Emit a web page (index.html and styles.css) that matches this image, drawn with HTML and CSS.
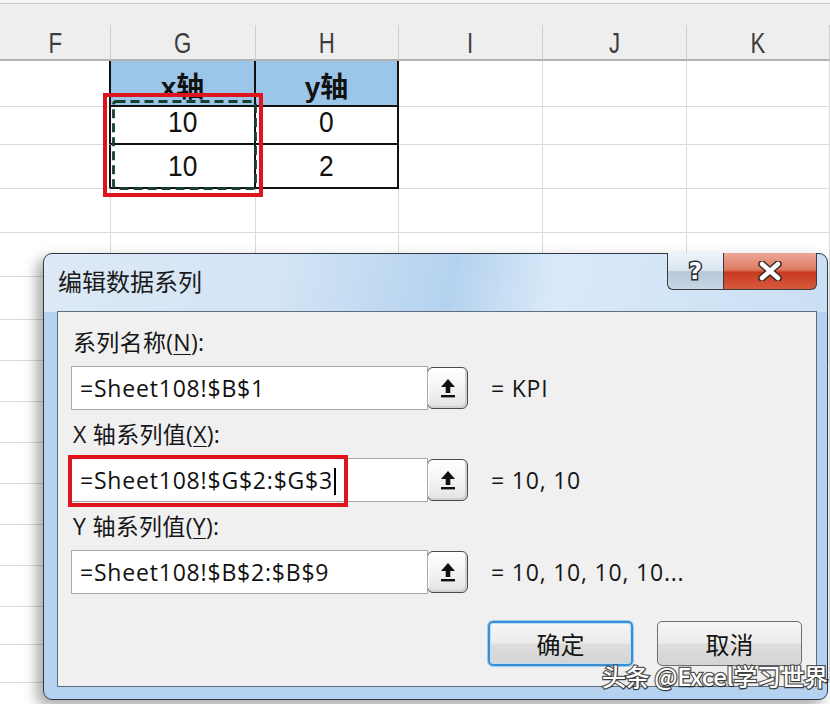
FILE: index.html
```html
<!DOCTYPE html>
<html lang="zh-CN">
<head>
<meta charset="utf-8">
<title>编辑数据系列</title>
<link rel="stylesheet" href="styles.css">
</head>
<body>
<div class="app">
  <div class="sheet">
    <div class="topstrip"></div>
    <div class="colhead">
      <div class="ch"><span>F</span></div><div class="ch"><span>G</span></div><div class="ch"><span>H</span></div><div class="ch"><span>I</span></div><div class="ch"><span>J</span></div><div class="ch"><span>K</span></div>
    </div>
    <div class="grid">
      <div class="row r40"><div class="c bk"></div><div class="c head bk bb">x轴</div><div class="c head bk bb">y轴</div><div class="c"></div><div class="c"></div><div class="c"></div></div>
      <div class="row r44"><div class="c bk"></div><div class="c num bk bb"><span>10</span></div><div class="c num bk bb"><span>0</span></div><div class="c"></div><div class="c"></div><div class="c"></div></div>
      <div class="row r44"><div class="c bk"></div><div class="c num bk bb"><span>10</span></div><div class="c num bk bb"><span>2</span></div><div class="c"></div><div class="c"></div><div class="c"></div></div>
      <div class="row r44"><div class="c"></div><div class="c"></div><div class="c"></div><div class="c"></div><div class="c"></div><div class="c"></div></div>
      <div class="row r44"><div class="c"></div><div class="c"></div><div class="c"></div><div class="c"></div><div class="c"></div><div class="c"></div></div>
      <div class="row r43"><div class="c"></div><div class="c"></div><div class="c"></div><div class="c"></div><div class="c"></div><div class="c"></div></div>
      <div class="row r41"><div class="c"></div><div class="c"></div><div class="c"></div><div class="c"></div><div class="c"></div><div class="c"></div></div>
      <div class="row r41"><div class="c"></div><div class="c"></div><div class="c"></div><div class="c"></div><div class="c"></div><div class="c"></div></div>
      <div class="row r41"><div class="c"></div><div class="c"></div><div class="c"></div><div class="c"></div><div class="c"></div><div class="c"></div></div>
      <div class="row r41"><div class="c"></div><div class="c"></div><div class="c"></div><div class="c"></div><div class="c"></div><div class="c"></div></div>
      <div class="row r41"><div class="c"></div><div class="c"></div><div class="c"></div><div class="c"></div><div class="c"></div><div class="c"></div></div>
      <div class="row r41"><div class="c"></div><div class="c"></div><div class="c"></div><div class="c"></div><div class="c"></div><div class="c"></div></div>
      <div class="row r41"><div class="c"></div><div class="c"></div><div class="c"></div><div class="c"></div><div class="c"></div><div class="c"></div></div>
      <div class="row r38"><div class="c"></div><div class="c"></div><div class="c"></div><div class="c"></div><div class="c"></div><div class="c"></div></div>
      <div class="row r38"><div class="c"></div><div class="c"></div><div class="c"></div><div class="c"></div><div class="c"></div><div class="c"></div></div>
    </div>
    <svg class="ants" width="146" height="92" viewBox="0 0 146 92">
      <rect x="1.5" y="1.5" width="142" height="87" rx="3" fill="none" stroke="#173f30" stroke-width="2.8" stroke-dasharray="9 5"/>
    </svg>
    <div class="redsel"></div>
  </div>

  <div class="dialog">
    <div class="titlebar">
      <div class="title">编辑数据系列</div>
      <div class="capbtns">
        <div class="help"><span class="qmark">?</span></div>
        <div class="close">
          <svg width="24" height="20" viewBox="0 0 24 20">
            <path d="M4 3 L20 17 M20 3 L4 17" stroke="#3a2a26" stroke-width="7.5" stroke-linecap="round" fill="none"/>
            <path d="M4 3 L20 17 M20 3 L4 17" stroke="#ffffff" stroke-width="4.5" stroke-linecap="round" fill="none"/>
          </svg>
        </div>
      </div>
    </div>
    <div class="panel">
      <div class="group">
        <div class="label">系列名称(<u>N</u>):</div>
        <div class="fieldrow">
          <div class="field">=Sheet108!$B$1</div>
          <div class="collapse"><svg width="18" height="22" viewBox="0 0 18 22"><path d="M9 2 L16 10 H11.3 V16 H6.7 V10 H2 Z" fill="#111"/><rect x="2" y="18" width="14" height="2.4" fill="#111"/></svg></div>
          <div class="result">= KPI</div>
        </div>
      </div>
      <div class="group">
        <div class="label">X 轴系列值(<u>X</u>):</div>
        <div class="fieldrow">
          <div class="field">=Sheet108!$G$2:$G$3<span class="caret"></span><div class="redbox"></div></div>
          <div class="collapse"><svg width="18" height="22" viewBox="0 0 18 22"><path d="M9 2 L16 10 H11.3 V16 H6.7 V10 H2 Z" fill="#111"/><rect x="2" y="18" width="14" height="2.4" fill="#111"/></svg></div>
          <div class="result">= 10, 10</div>
        </div>
      </div>
      <div class="group">
        <div class="label">Y 轴系列值(<u>Y</u>):</div>
        <div class="fieldrow">
          <div class="field">=Sheet108!$B$2:$B$9</div>
          <div class="collapse"><svg width="18" height="22" viewBox="0 0 18 22"><path d="M9 2 L16 10 H11.3 V16 H6.7 V10 H2 Z" fill="#111"/><rect x="2" y="18" width="14" height="2.4" fill="#111"/></svg></div>
          <div class="result">= 10, 10, 10, 10...</div>
        </div>
      </div>
      <div class="buttons">
        <div class="btn ok">确定</div>
        <div class="btn">取消</div>
      </div>
    </div>
  </div>

  <div class="watermark">头条 @Excel学习世界</div>
</div>
</body>
</html>
```

FILE: styles.css
```css
* { box-sizing: border-box; }
html, body { margin: 0; padding: 0; background: #fff; }
.app {
  position: relative;
  width: 830px;
  height: 704px;
  overflow: hidden;
  font-family: "Open Sans", "Noto Sans CJK SC", sans-serif;
}

/* ---------- spreadsheet ---------- */
.sheet { position: relative; }
.topstrip {
  height: 4px;
  background: #f6f6f6;
  border-bottom: 1px solid #c8c8c8;
}
.colhead {
  display: grid;
  grid-template-columns: 111px 145px 143px 144px 144px 143px;
  padding-top: 21px;
  background: #eeeeee;
}
.ch {
  height: 36px;
  border-right: 1px solid #cdcdcd;
  border-bottom: 2px solid #b2b2b2;
  display: flex;
  align-items: center;
  justify-content: center;
  font-family: "Liberation Sans", sans-serif;
  font-size: 30px;
  color: #3c3c3c;
  padding-top: 2px;
}
.ch span { display: inline-block; transform: scaleX(0.74); }
.row {
  display: grid;
  grid-template-columns: 111px 145px 143px 144px 144px 143px;
}
.r40 { height: 40px; }
.r44 { height: 44px; }
.r43 { height: 43px; }
.r41 { height: 41px; }
.r38 { height: 38px; }
.c {
  border-right: 1px solid #dadada;
  border-bottom: 1px solid #dadada;
  display: flex;
  align-items: center;
  justify-content: center;
  font-family: "Liberation Sans", "Noto Sans CJK SC", sans-serif;
  color: #111;
}
.c.bk { border-right: 2px solid #111; }
.c.bb { border-bottom: 2px solid #111; }
.c.head {
  background: #9cc5ea;
  font-family: "Liberation Sans", "Noto Sans CJK SC", sans-serif;
  font-weight: 700;
  font-size: 28px;
  padding-top: 4px;
}
.c.num { font-size: 30px; }
.c.num span { display: inline-block; transform: scaleX(0.88); }

.ants {
  position: absolute;
  left: 112px;
  top: 100px;
}
.redsel {
  position: absolute;
  left: 103px;
  top: 93px;
  width: 160px;
  height: 104px;
  border: 4.5px solid #e0141c;
}

/* ---------- dialog ---------- */
.dialog {
  position: absolute;
  left: 43px;
  top: 253px;
  width: 785px;
  height: 447px;
  border: 1px solid #2f3a46;
  border-radius: 9px;
  background:
    linear-gradient(180deg, rgba(255,255,255,0) 0, rgba(255,255,255,0) 58px, #b5d3f1 58px),
    linear-gradient(100deg, #dde9f6 0%, #d3e4f5 28%, #b4d2ef 48%, #d9e9f8 60%, #c6ddf3 100%);
  box-shadow: -6px 6px 14px rgba(0, 0, 0, 0.35);
  display: flex;
  flex-direction: column;
}
.titlebar {
  height: 57px;
  display: flex;
  justify-content: space-between;
  align-items: flex-start;
}
.title {
  margin: 12px 0 0 14px;
  font-family: "Noto Sans CJK SC", sans-serif;
  font-size: 24px;
  line-height: 30px;
  color: #1b1b1b;
}
.capbtns {
  display: flex;
  margin: -1px 10px 0 0;
}
.help, .close {
  height: 37px;
  border: 1px solid #3c3c3c;
  border-top: none;
  display: flex;
  align-items: center;
  justify-content: center;
}
.help {
  width: 56px;
  border-right: none;
  border-bottom-left-radius: 6px;
  background: linear-gradient(180deg, #eef3f9 0%, #dbe5ef 48%, #b7c9db 52%, #c8d6e4 100%);
}
.close {
  width: 94px;
  border-bottom-right-radius: 6px;
  background: linear-gradient(180deg, #eca898 0%, #dc7a62 46%, #c73a20 54%, #d65a3c 100%);
}
.qmark {
  font-family: "DejaVu Sans", sans-serif;
  font-weight: 700;
  font-size: 23px;
  line-height: 1;
  color: #fff;
  -webkit-text-stroke: 3px #2b2f36;
  paint-order: stroke fill;
}
.panel {
  margin: 0 10px 0 13px;
  height: 376px;
  background: #f0f0f1;
  border: 1px solid #5f6e7e;
  padding: 15px 14px 0 13px;
  display: flex;
  flex-direction: column;
}
.group { margin-bottom: 9px; }
.label {
  height: 30px;
  line-height: 30px;
  padding-left: 2px;
  font-size: 23px;
  color: #161616;
  margin-bottom: 9px;
  letter-spacing: 0.3px;
}
.label u { text-underline-offset: 3px; text-decoration-thickness: 1px; }
.fieldrow {
  display: flex;
  align-items: center;
}
.field {
  position: relative;
  width: 357px;
  height: 44px;
  border: 1px solid #a9a9a9;
  background: #fff;
  padding-left: 8px;
  font-size: 23px;
  line-height: 42px;
  letter-spacing: 0.8px;
  color: #111;
  white-space: nowrap;
}
.caret {
  display: inline-block;
  width: 1.5px;
  height: 27px;
  background: #000;
  vertical-align: middle;
  margin-left: 1px;
  margin-top: -3px;
}
.redbox {
  position: absolute;
  left: -4px;
  top: -4px;
  width: 280px;
  height: 52px;
  border: 4.5px solid #e0141c;
}
.collapse {
  width: 41px;
  height: 42px;
  margin-left: -1px;
  border: 1px solid #4a4a4a;
  border-radius: 6px;
  background: linear-gradient(180deg, #ffffff 0%, #f4f4f4 50%, #e2e2e2 100%);
  box-shadow: inset -2px -2px 0 #d0d0d0, inset 1px 1px 0 #fff;
  display: flex;
  align-items: center;
  justify-content: center;
}
.result {
  margin-left: 23px;
  font-size: 23px;
  letter-spacing: 0.8px;
  color: #161616;
  white-space: nowrap;
}
.buttons {
  display: flex;
  justify-content: flex-end;
  gap: 24px;
  margin-top: 18px;
}
.btn {
  width: 145px;
  height: 45px;
  border: 1px solid #6e6e6e;
  border-radius: 5px;
  background: linear-gradient(180deg, #f5f5f5 0%, #ececec 48%, #dddddd 52%, #d4d4d4 100%);
  display: flex;
  align-items: center;
  justify-content: center;
  font-family: "Noto Sans CJK SC", sans-serif;
  font-size: 24px;
  color: #141414;
}
.btn.ok {
  border: 2px solid #3a8fd3;
  box-shadow: 0 0 0 1px #9ccbee, inset 0 0 0 1px #bfe1f8;
}

/* ---------- watermark ---------- */
.watermark {
  position: absolute;
  left: 602px;
  top: 660px;
  font-family: "Noto Sans CJK SC", sans-serif;
  font-weight: 500;
  font-size: 24px;
  line-height: 32px;
  color: #fff;
  -webkit-text-stroke: 2.4px rgba(45, 45, 45, 0.8);
  paint-order: stroke fill;
  text-shadow: 1px 1px 1px rgba(0, 0, 0, 0.35);
  white-space: nowrap;
  letter-spacing: -0.4px;
}
```
